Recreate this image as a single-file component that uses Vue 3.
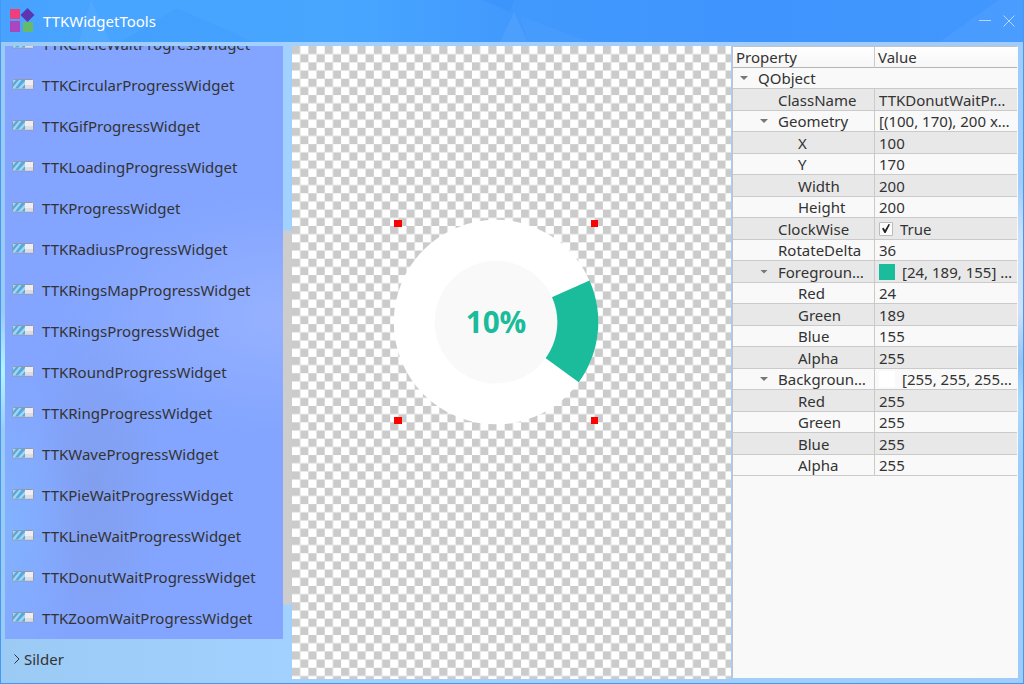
<script setup>
import { ref } from 'vue'

const widgets = [
  'TTKCircleWaitProgressWidget',
  'TTKCircularProgressWidget',
  'TTKGifProgressWidget',
  'TTKLoadingProgressWidget',
  'TTKProgressWidget',
  'TTKRadiusProgressWidget',
  'TTKRingsMapProgressWidget',
  'TTKRingsProgressWidget',
  'TTKRoundProgressWidget',
  'TTKRingProgressWidget',
  'TTKWaveProgressWidget',
  'TTKPieWaitProgressWidget',
  'TTKLineWaitProgressWidget',
  'TTKDonutWaitProgressWidget',
  'TTKZoomWaitProgressWidget',
]

const clockwise = ref(true)

const rows = [
  { name: 'ClassName', level: 1, value: 'TTKDonutWaitPr…' },
  { name: 'Geometry', level: 1, value: '[(100, 170), 200 x…', open: true },
  { name: 'X', level: 2, value: '100' },
  { name: 'Y', level: 2, value: '170' },
  { name: 'Width', level: 2, value: '200' },
  { name: 'Height', level: 2, value: '200' },
  { name: 'ClockWise', level: 1, value: 'True', check: true },
  { name: 'RotateDelta', level: 1, value: '36' },
  { name: 'Foregroun…', level: 1, value: '[24, 189, 155] …', open: true, swatch: 'green' },
  { name: 'Red', level: 2, value: '24' },
  { name: 'Green', level: 2, value: '189' },
  { name: 'Blue', level: 2, value: '155' },
  { name: 'Alpha', level: 2, value: '255' },
  { name: 'Backgroun…', level: 1, value: '[255, 255, 255…', open: true, swatch: 'white' },
  { name: 'Red', level: 2, value: '255' },
  { name: 'Green', level: 2, value: '255' },
  { name: 'Blue', level: 2, value: '255' },
  { name: 'Alpha', level: 2, value: '255' },
]
</script>

<template>
  <div class="window">
    <header class="titlebar">
      <svg class="facets" viewBox="0 0 1024 42" preserveAspectRatio="none" aria-hidden="true">
        <path d="M90 0L78 42h32z" fill="#fff" opacity=".05" />
        <path d="M176 8L120 42h134z" fill="#0060e0" opacity=".05" />
        <path d="M482 0h32l-4 12z" fill="#0060e0" opacity=".08" />
        <path d="M514 12L500 42h28z" fill="#fff" opacity=".06" />
        <path d="M520 16L590 42H528z" fill="#fff" opacity=".03" />
        <path d="M1000 0L940 42h84V0z" fill="#fff" opacity=".04" />
      </svg>
      <svg class="logo" viewBox="0 0 26 26" aria-hidden="true">
        <rect x="1" y="1" width="10" height="10" fill="#ec407a" />
        <path d="M18.500 0l7 7-7 7-7-7z" fill="#5e35b1" />
        <rect x="1" y="13" width="10" height="11" fill="#ab47bc" />
        <rect x="14" y="14" width="10" height="10" fill="#66bb6a" />
      </svg>
      <h1>TTKWidgetTools</h1>
      <div class="controls">
        <button type="button" aria-label="Minimize">
          <svg viewBox="0 0 12 12"><path d="M0 5.500h12" /></svg>
        </button>
        <button type="button" aria-label="Close">
          <svg viewBox="0 0 12 12"><path d="M.5.5l11 11M11.500.5l-11 11" /></svg>
        </button>
      </div>
    </header>

    <main class="content">
      <nav class="sidebar">
        <div class="scroller">
          <ul class="list">
            <li v-for="w in widgets" :key="w">
              <button type="button" class="item">
                <svg class="bar" viewBox="0 0 22 11" aria-hidden="true">
                  <rect x=".5" y=".5" width="21" height="9.500" rx="1" fill="#eeeef2" stroke="#9397b0" />
                  <path d="M1 1h12v8.500H1z" fill="#57a9dc" />
                  <path d="M1 1h3L1 4.500zM1 8l6-7h2.500L3 9.500H1zM6 9.500L13 2v3.500L9.500 9.500z" fill="#a3d6f2" />
                  <path d="M13 6h8v3.500h-8z" fill="#dcdce4" />
                </svg>
                <span>{{ w }}</span>
              </button>
            </li>
          </ul>
          <div class="track"><div class="thumb"></div></div>
        </div>
        <button type="button" class="group">
          <svg viewBox="0 0 8 12" aria-hidden="true"><path d="M1.500 1.500L6 6l-4.500 4.500" /></svg>
          <span>Silder</span>
        </button>
      </nav>

      <section class="stage">
        <svg viewBox="0 0 430 619" preserveAspectRatio="xMinYMin slice" role="img" aria-label="Donut progress preview">
          <defs>
            <pattern id="checker" width="16" height="16" patternUnits="userSpaceOnUse">
              <path d="M0 0h16v16H0z" fill="#fff" />
              <path d="M0 0h8v8H0zM8 8h8v8H8z" fill="#cbcbcb" />
            </pattern>
          </defs>
          <rect width="600" height="1000" fill="url(#checker)" shape-rendering="crispEdges" />
          <circle cx="199.500" cy="270" r="100" fill="#fff" />
          <path d="M199.500 270L290.900 229.300A100 100 0 0 1 280.400 328.800z" fill="#1abc9c" />
          <circle cx="199.500" cy="270" r="60" fill="#f9f9f9" />
          <text x="199.500" y="281" text-anchor="middle">10%</text>
          <path
            d="M100 170h8v7h-8zM292 170h7v7h-7zM100 363h8v7h-8zM292 363h7v7h-7z"
            fill="#f00"
            shape-rendering="crispEdges"
          />
        </svg>
      </section>

      <section class="properties">
        <table>
          <colgroup>
            <col class="col-name" />
            <col class="col-value" />
          </colgroup>
          <thead>
            <tr>
              <th scope="col">Property</th>
              <th scope="col">Value</th>
            </tr>
          </thead>
          <tbody>
            <tr>
              <td colspan="2">
                <div class="cell level-0"><i class="arrow"></i><span>QObject</span></div>
              </td>
            </tr>
            <tr v-for="(r, i) in rows" :key="i">
              <td>
                <div class="cell" :class="'level-' + r.level">
                  <i class="arrow" :class="{ none: !r.open }"></i><span>{{ r.name }}</span>
                </div>
              </td>
              <td>
                <label v-if="r.check" class="cell value">
                  <input v-model="clockwise" type="checkbox" />
                  <span>{{ r.value }}</span>
                </label>
                <div v-else class="cell value">
                  <i v-if="r.swatch" class="swatch" :class="r.swatch"></i>
                  <span>{{ r.value }}</span>
                </div>
              </td>
            </tr>
          </tbody>
        </table>
      </section>
    </main>
  </div>
</template>

<style>
body {
  margin: 0;
}
</style>

<style scoped>
.window {
  box-sizing: border-box;
  height: 100vh;
  display: flex;
  flex-direction: column;
  border: 1px solid #4398f2;
  border-top: 0;
  background: linear-gradient(90deg, #47a3ff 0%, #48a6ff 33%, #4199fd 50%, #3f94fd 75%, #4398ff 100%);
  font-family: "Noto Sans", "Open Sans", sans-serif;
  font-size: 15px;
  color: #333;
  overflow: hidden;
}
button {
  padding: 0;
  border: 0;
  background: none;
  font: inherit;
  color: inherit;
}
.titlebar {
  position: relative;
  flex: none;
  height: 42px;
  display: flex;
  align-items: center;
  padding: 0 8px;
}
.facets {
  position: absolute;
  inset: 0;
  width: 100%;
  height: 100%;
}
.logo {
  position: relative;
  width: 26px;
  height: 26px;
}
h1 {
  position: relative;
  margin: 0 0 0 8px;
  font-size: 15px;
  font-weight: 400;
  color: #fff;
}
.controls {
  position: relative;
  margin-left: auto;
  display: flex;
  gap: 12px;
}
.controls button,
.controls svg {
  display: block;
  width: 12px;
  height: 12px;
}
.controls path {
  fill: none;
  stroke: #b5d8ff;
}
.content {
  flex: 1;
  min-height: 0;
  display: flex;
  padding: 4px 5px 4px 4px;
  background:
    linear-gradient(180deg, #a0ccfb 0%, #a0ccfb 22%, #c9dff7 30%, #cfe0f6 42%, #93c3f2 50%, #add9fb 56%, #a0cdfa 66%, #9fcbfa 100%)
      right / 6px 100% no-repeat,
    radial-gradient(40px 60px at 0 330px, #b4f4ff, #b4f4ff00),
    linear-gradient(90deg, #9bcaf5 0%, #a3d1ff 28%, #a0ccfb 100%);
}
.sidebar {
  flex: 0 0 287px;
  display: flex;
  flex-direction: column;
}
.scroller {
  flex: 1;
  min-height: 0;
  display: flex;
}
.list {
  flex: 1;
  min-width: 0;
  margin: 0;
  padding: 0 0 1px;
  list-style: none;
  display: flex;
  flex-direction: column;
  justify-content: flex-end;
  overflow: hidden;
  background:
    radial-gradient(70px 160px at 0 480px, #82b2ff, #82b2ff00),
    radial-gradient(220px 120px at 100% 270px, #96b1ff, #96b1ff00),
    radial-gradient(70px 180px at 90px 440px, #829fee, #829fee00),
    #83a5ff;
}
.item {
  width: 100%;
  height: 41px;
  display: flex;
  align-items: center;
  gap: 8px;
  padding-left: 7px;
  text-align: left;
}
.bar {
  width: 22px;
  height: 11px;
}
.track {
  width: 9px;
  display: flex;
  flex-direction: column;
  justify-content: flex-end;
  padding-bottom: 34px;
  box-sizing: border-box;
}
.thumb {
  height: 67%;
  border-radius: 4px;
  background: #cdcdcd;
}
.group {
  flex: none;
  height: 40px;
  display: flex;
  align-items: center;
  gap: 3px;
  padding-left: 8px;
}
.group svg {
  width: 8px;
  height: 12px;
}
.group path {
  fill: none;
  stroke: #333;
}
.stage {
  flex: 1;
  min-width: 0;
  overflow: hidden;
}
.stage svg {
  display: block;
  width: 100%;
  height: 100%;
}
.stage text {
  font-size: 29px;
  font-family: "Open Sans", "Noto Sans", sans-serif;
  font-weight: 700;
  fill: #1abc9c;
}
.properties {
  flex: 0 0 286px;
  box-sizing: border-box;
  margin: 0 0 1px 1px;
  border: 1px solid #c3c3c3;
  border-right-color: #f9f9f9;
  border-bottom: 0;
  background: #f9f9f9;
  overflow: hidden;
}
table {
  width: 100%;
  table-layout: fixed;
  border-collapse: separate;
  border-spacing: 0;
}
.col-name {
  width: 142px;
}
th,
td {
  box-sizing: border-box;
  padding: 0;
  border-bottom: 1px solid #cacaca;
  line-height: 20px;
  white-space: nowrap;
}
th {
  height: 21px;
  padding-left: 3px;
  border-color: #b5b5b5;
  background: linear-gradient(#fff, #f6f6f6);
  font-weight: 400;
  text-align: left;
}
th:first-child,
td:first-child:not([colspan]) {
  border-right: 1px solid #cacaca;
}
tbody tr:nth-child(odd) td {
  height: 21px;
}
tbody tr:nth-child(even) td {
  height: 22px;
  background: #e8e8e8;
}
.cell {
  display: flex;
  align-items: center;
  height: 20px;
}
.level-0 {
  padding-left: 7px;
}
.level-1 {
  padding-left: 27px;
}
.level-2 {
  padding-left: 47px;
}
.arrow {
  flex: none;
  width: 8px;
  height: 4px;
  margin-right: 10px;
  background: #777;
  clip-path: polygon(0 0, 100% 0, 50% 100%);
}
.arrow.none {
  visibility: hidden;
}
.value {
  padding-left: 4px;
}
.swatch {
  width: 16px;
  height: 16px;
  margin-right: 7px;
}
.green {
  background: #1abc9c;
}
.white {
  background: #fff;
}
input {
  appearance: none;
  box-sizing: border-box;
  width: 14px;
  height: 14px;
  margin: 0 7px 0 0;
  border: 1px solid #bbb;
  border-radius: 1px;
  background: #fcfcfc;
  display: grid;
  place-items: center;
}
input:checked::before {
  content: "";
  width: 8px;
  height: 9px;
  background: #222;
  clip-path: polygon(0 50%, 20% 42%, 38% 68%, 82% 0, 100% 6%, 45% 100%, 30% 100%);
}
</style>
